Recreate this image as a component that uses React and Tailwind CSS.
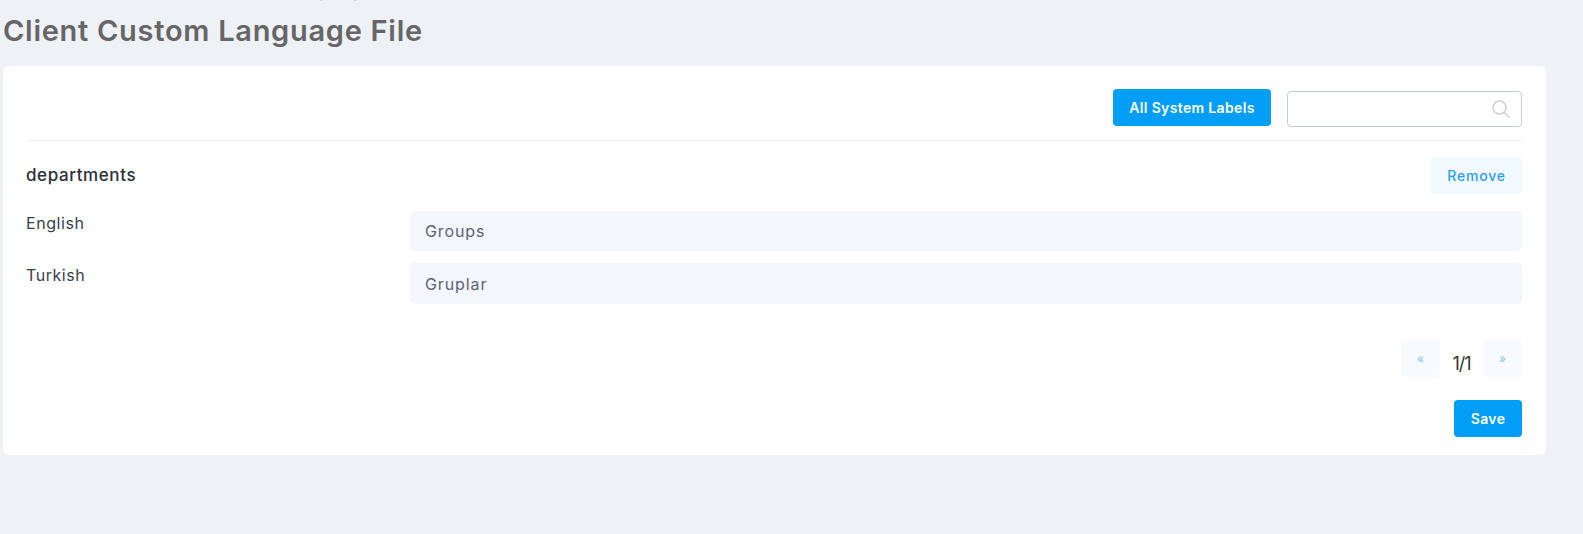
function Row({ label, value, height }) {
  return (
    <div className="flex">
      <label className="w-[383px] shrink-0 -ml-px mr-px text-[16px] leading-[24px] tracking-[0.55px] text-[#3a3f4b]">{label}</label>
      <div className={`flex-1 ${height} rounded-[5px] bg-[#f3f6fa] pl-[15px] flex items-center text-[16px] tracking-[0.9px] text-[#5e6278]`}>
        {value}
      </div>
    </div>
  );
}

export default function App() {
  return (
    <div className="h-[534px] overflow-hidden bg-[#eef1f6] px-[3px] font-['Inter','Noto_Sans',sans-serif]">
      <div className="-mt-[19px] h-[20px] pl-[141px] text-[16px] leading-[20px] tracking-[2px] text-[#6b6b6b] whitespace-nowrap">
        Client Custom Language File
      </div>
      <h1 className="mt-[12px] text-[29px] leading-[36px] font-semibold tracking-[0.72px] text-[#666666]">Client Custom Language File</h1>
      <div className="mt-[17px] w-[1543px] h-[389px] rounded-[6px] bg-white px-[24px] pt-[23px]">
        <div className="flex justify-end gap-[16px] border-b border-[#ebedf2] h-[52px]">
          <button className="h-[37px] w-[158px] rounded-[4px] bg-[#009ef7] text-[14px] font-semibold tracking-[0.35px] text-white">
            All System Labels
          </button>
          <div className="mt-[2px] h-[36px] w-[235px] rounded-[4px] border border-[#c3cad9] flex items-center justify-end pr-[11px]">
            <svg width="18" height="18" viewBox="0 0 18 18" fill="none" stroke="#d0d0d0" strokeWidth="1.5">
              <circle cx="7.5" cy="7.5" r="6.5" />
              <path d="M12.2 12.2 L17.5 17.5" />
            </svg>
          </div>
        </div>
        <div className="mt-[16px] flex items-center justify-between">
          <span className="-ml-px text-[17px] font-medium tracking-[0.6px] text-[#2b2f38]">departments</span>
          <button className="h-[37px] w-[91px] rounded-[4px] bg-[#f1faff] text-[14px] font-medium tracking-[0.8px] text-[#2f9bff]">
            Remove
          </button>
        </div>
        <div className="mt-[17px] flex flex-col gap-[12px]">
          <Row label="English" value="Groups" height="h-[40px]" />
          <Row label="Turkish" value="Gruplar" height="h-[41px]" />
        </div>
        <div className="mt-[36px] flex justify-end items-center">
          <button className="h-[37px] w-[39px] rounded-[4px] bg-[#f7fbff] text-[12px] text-[#7cc7fb]">«</button>
          <span className="w-[43px] pt-[9px] text-center text-[18px] tracking-[-1.1px] text-[#333333]">1/1</span>
          <button className="h-[37px] w-[39px] rounded-[4px] bg-[#f7fbff] text-[12px] text-[#7cc7fb]">»</button>
        </div>
        <div className="mt-[23px] flex justify-end">
          <button className="h-[37px] w-[68px] rounded-[4px] bg-[#009ef7] text-[14px] font-semibold tracking-[0.35px] text-white">
            Save
          </button>
        </div>
      </div>
    </div>
  );
}
